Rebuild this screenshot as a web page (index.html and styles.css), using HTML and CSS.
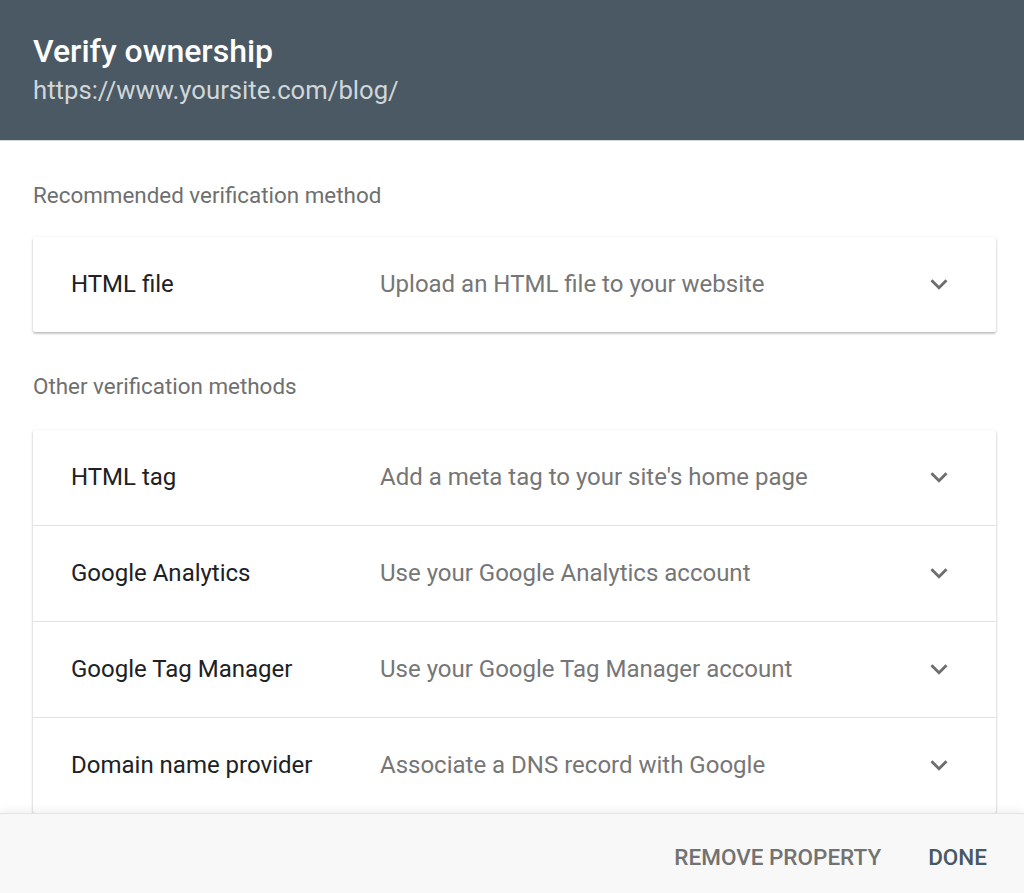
FILE: index.html
```html
<!DOCTYPE html>
<html lang="en">
<head>
<meta charset="utf-8">
<title>Verify ownership</title>
<link rel="stylesheet" href="styles.css">
</head>
<body>
<div class="dialog">
  <header class="header">
    <h1 class="title">Verify ownership</h1>
    <div class="subtitle">https://www.yoursite.com/blog/</div>
  </header>
  <main class="content">
    <div class="section-label first">Recommended verification method</div>
    <div class="card">
      <div class="row">
        <div class="row-name">HTML file</div>
        <div class="row-desc">Upload an HTML file to your website</div>
        <svg class="chev" viewBox="0 0 24 24"><path d="M7.41 8.59 12 13.17l4.59-4.58L18 10l-6 6-6-6z"/></svg>
      </div>
    </div>
    <div class="section-label">Other verification methods</div>
    <div class="card">
      <div class="row">
        <div class="row-name">HTML tag</div>
        <div class="row-desc">Add a meta tag to your site's home page</div>
        <svg class="chev" viewBox="0 0 24 24"><path d="M7.41 8.59 12 13.17l4.59-4.58L18 10l-6 6-6-6z"/></svg>
      </div>
      <div class="row">
        <div class="row-name">Google Analytics</div>
        <div class="row-desc">Use your Google Analytics account</div>
        <svg class="chev" viewBox="0 0 24 24"><path d="M7.41 8.59 12 13.17l4.59-4.58L18 10l-6 6-6-6z"/></svg>
      </div>
      <div class="row">
        <div class="row-name">Google Tag Manager</div>
        <div class="row-desc">Use your Google Tag Manager account</div>
        <svg class="chev" viewBox="0 0 24 24"><path d="M7.41 8.59 12 13.17l4.59-4.58L18 10l-6 6-6-6z"/></svg>
      </div>
      <div class="row">
        <div class="row-name">Domain name provider</div>
        <div class="row-desc">Associate a DNS record with Google</div>
        <svg class="chev" viewBox="0 0 24 24"><path d="M7.41 8.59 12 13.17l4.59-4.58L18 10l-6 6-6-6z"/></svg>
      </div>
    </div>
  </main>
  <footer class="footer">
    <button class="btn btn-secondary">REMOVE PROPERTY</button>
    <button class="btn btn-primary">DONE</button>
  </footer>
</div>
</body>
</html>
```

FILE: styles.css
```css
* { box-sizing: border-box; }
html, body {
  margin: 0;
  padding: 0;
  background: #fff;
  font-family: Roboto, "Noto Sans", Arial, sans-serif;
}
.dialog {
  width: 1024px;
  height: 893px;
  display: flex;
  flex-direction: column;
  overflow: hidden;
}
.header {
  flex: none;
  height: 141px;
  background: #4a5963;
  padding: 32px 33px 0;
  border-bottom: 1px solid #d4dbe0;
}
.title {
  margin: 0;
  font-size: 32px;
  font-weight: 500;
  line-height: 38px;
  color: #ffffff;
}
.subtitle {
  margin-top: 5px;
  font-size: 25.7px;
  line-height: 30px;
  color: #d0d6da;
}
.content {
  flex: 1;
  min-height: 0;
  overflow: hidden;
  padding: 0 28px 0 33px;
}
.section-label {
  font-size: 22.4px;
  line-height: 28px;
  color: #6f6f6f;
  margin: 40px 0 30px;
}
.section-label.first {
  margin-top: 40px;
  margin-bottom: 28px;
}
.card {
  background: #fff;
  box-shadow: 0 1px 3px rgba(0,0,0,0.2), 0 2px 2px rgba(0,0,0,0.12);
  border-radius: 2px;
}
.row {
  display: flex;
  align-items: center;
  height: 96px;
  padding: 0 40px 2px 38px;
  border-top: 1px solid #e2e2e2;
}
.card .row:first-child {
  border-top: none;
  height: 95px;
}
.row-name {
  width: 309px;
  flex: none;
  font-size: 24px;
  color: #202124;
}
.row-desc {
  flex: 1;
  font-size: 24px;
  color: #767676;
}
.chev {
  width: 34px;
  height: 34px;
  fill: #6e6e6e;
  flex: none;
}
.footer {
  flex: none;
  height: 80px;
  background: #f8f8f8;
  border-top: 1px solid #e4e4e4;
  box-shadow: 0 -3px 8px rgba(0,0,0,0.06);
  display: flex;
  justify-content: flex-end;
  align-items: center;
  padding: 6px 21px 0 0;
  gap: 8px;
  position: relative;
}
.btn {
  background: none;
  border: none;
  font-family: Roboto, "Noto Sans", Arial, sans-serif;
  font-size: 22.5px;
  font-weight: 500;
  padding: 8px 16px;
  cursor: pointer;
}
.btn-secondary { color: #727272; margin-right: 7px; }
.btn-primary { color: #465964; }
```
